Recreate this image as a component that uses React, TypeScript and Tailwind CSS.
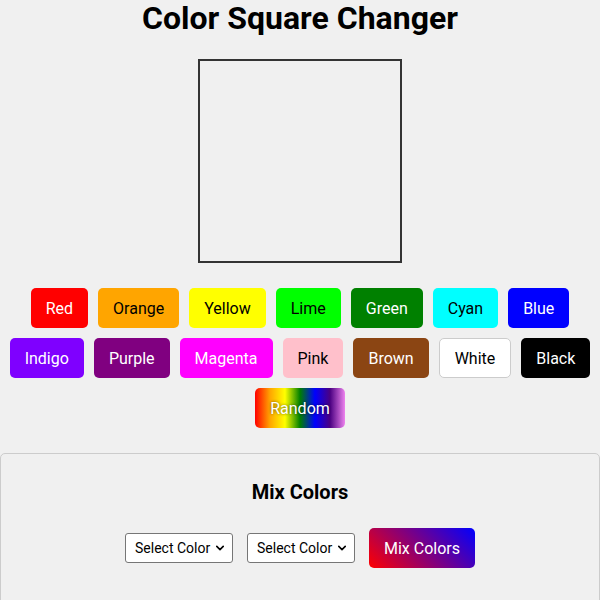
import { useState } from 'react';

// ─── Data ─────────────────────────────────────────────────────────────────────

const COLORS = [
  { name: 'Red', cls: 'bg-[#ff0000] text-white' },
  { name: 'Orange', cls: 'bg-[#ffa500] text-black' },
  { name: 'Yellow', cls: 'bg-[#ffff00] text-black' },
  { name: 'Lime', cls: 'bg-[#00ff00] text-black' },
  { name: 'Green', cls: 'bg-[#008000] text-white' },
  { name: 'Cyan', cls: 'bg-[#00ffff] text-black' },
  { name: 'Blue', cls: 'bg-[#0000ff] text-white' },
  { name: 'Indigo', cls: 'bg-[#7f00ff] text-white' },
  { name: 'Purple', cls: 'bg-[#800080] text-white' },
  { name: 'Magenta', cls: 'bg-[#ff00ff] text-white' },
  { name: 'Pink', cls: 'bg-[#ffc0cb] text-black' },
  { name: 'Brown', cls: 'bg-[#8b4513] text-white' },
  { name: 'White', cls: 'bg-white text-black border border-[#cccccc]' },
  { name: 'Black', cls: 'bg-black text-white' },
];

const HEX: Record<string, string> = {
  Red: '#ff0000', Orange: '#ffa500', Yellow: '#ffff00', Lime: '#00ff00',
  Green: '#008000', Cyan: '#00ffff', Blue: '#0000ff', Indigo: '#7f00ff',
  Purple: '#800080', Magenta: '#ff00ff', Pink: '#ffc0cb', Brown: '#8b4513',
  White: '#ffffff', Black: '#000000',
};

// ─── Select ───────────────────────────────────────────────────────────────────

function ColorSelect({ value, onChange }: { value: string; onChange: (v: string) => void }) {
  return (
    <div className="relative w-[108px] h-[30px]">
      <select
        value={value}
        onChange={e => onChange(e.target.value)}
        className="appearance-none w-full h-full pl-[9px] pr-[20px] bg-white border border-[#767676] rounded-[3px] text-[14px] text-black"
      >
        <option value="">Select Color</option>
        {COLORS.map(c => (
          <option key={c.name} value={c.name}>{c.name}</option>
        ))}
      </select>
      <svg
        viewBox="0 0 10 6"
        className="pointer-events-none absolute right-[9px] top-[12px] w-[8px] h-[6px]"
        aria-hidden="true"
      >
        <path d="M1 1l4 4 4-4" fill="none" stroke="#000" strokeWidth="2" strokeLinecap="round" strokeLinejoin="round" />
      </svg>
    </div>
  );
}

// ─── Component ────────────────────────────────────────────────────────────────

export default function App() {
  const [color, setColor] = useState<string | null>(null);
  const [a, setA] = useState('');
  const [b, setB] = useState('');

  function mix() {
    if (!a || !b) return;
    const p = (h: string) => [1, 3, 5].map(i => parseInt(h.slice(i, i + 2), 16));
    const [x, y] = [p(HEX[a]), p(HEX[b])];
    setColor('rgb(' + x.map((v, i) => Math.round((v + y[i]) / 2)).join(',') + ')');
  }

  function random() {
    setColor('#' + Math.floor(Math.random() * 0xffffff).toString(16).padStart(6, '0'));
  }

  return (
    <div className="h-[600px] bg-[#f0f0f0] font-['Roboto',sans-serif] text-black flex flex-col items-center overflow-hidden">
      <h1 className="text-[32px] font-bold leading-[37px] mt-0">Color Square Changer</h1>

      <div
        className="mt-[22px] w-[204px] h-[204px] shrink-0 border-2 border-[#333333]"
        style={color ? { backgroundColor: color } : undefined}
      />

      <div className="mt-[20px] w-[600px] flex flex-wrap justify-center">
        {COLORS.map(c => (
          <button
            key={c.name}
            onClick={() => setColor(HEX[c.name])}
            className={`m-[5px] h-[40px] px-[15px] rounded-[5px] text-[16px] leading-[19px] ${c.cls}`}
          >
            {c.name}
          </button>
        ))}
        <button
          onClick={random}
          className="m-[5px] h-[40px] px-[15px] rounded-[5px] text-[16px] leading-[19px] text-white [text-shadow:0_0_3px_rgba(0,0,0,0.6)] bg-[linear-gradient(to_right,red,orange,yellow,green,blue,indigo,violet)]"
        >
          Random
        </button>
      </div>

      <div className="mt-[20px] w-full h-[200px] shrink-0 border border-[#cccccc] rounded-[5px] flex flex-col items-center pt-[26px]">
        <h2 className="text-[20px] font-bold leading-6">Mix Colors</h2>
        <div className="mt-[24px] flex items-center gap-[14px]">
          <ColorSelect value={a} onChange={setA} />
          <ColorSelect value={b} onChange={setB} />
          <button
            onClick={mix}
            className="h-[40px] px-[15px] rounded-[5px] text-[16px] leading-[19px] text-white bg-[linear-gradient(45deg,#ff0000,#0000ff)]"
          >
            Mix Colors
          </button>
        </div>
      </div>
    </div>
  );
}
